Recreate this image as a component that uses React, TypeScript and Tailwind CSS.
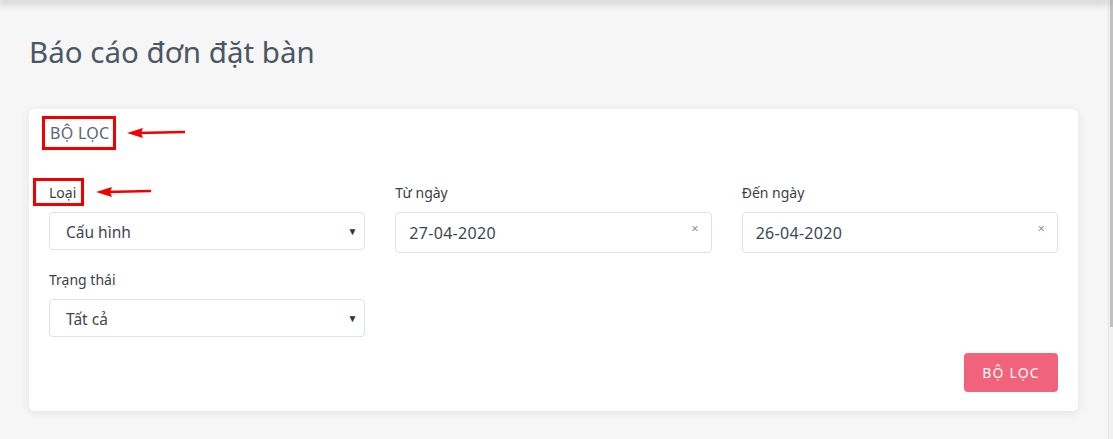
const font = { fontFamily: "'Noto Sans', 'Open Sans', sans-serif" };

const Arrow = ({ width }: { width: number }) => (
  <svg width={width} height="12" viewBox={`0 0 ${width} 12`} className="block">
    <line x1="10" y1="6" x2={width} y2="5" stroke="#f20000" strokeWidth="2.5" />
    <polygon points="0,6 16,1 14,6 16,11" fill="#f20000" />
  </svg>
);

const SelectBox = ({ value }: { value: string }) => (
  <div className="h-[38px] flex items-center justify-between bg-white border border-[#dde2ee] rounded-[4px] pl-4 pr-[7px]">
    <span className="pt-[3px] text-[15.5px] text-[#3b4754]">{value}</span>
    <span className="text-[10px] text-[#2c3440] leading-none">▼</span>
  </div>
);

const DateBox = ({ value }: { value: string }) => (
  <div className="h-[41px] flex items-center justify-between bg-white border border-[#dde2ee] rounded-[4px] pl-[13px] pr-[12px]">
    <span className="text-[16px] tracking-[0.3px] text-[#3b4754]">{value}</span>
    <span className="text-[13px] text-[#8a94a3] leading-none -mt-2">×</span>
  </div>
);

const Label = ({ children }: { children: React.ReactNode }) => (
  <div className="h-5 leading-5 text-[14px] text-[#3a3f46] mb-[9px]">{children}</div>
);

export default function App() {
  return (
    <div className="flex w-[1113px] h-[439px] bg-[#f6f6f6] overflow-hidden" style={font}>
      <div className="flex-1 relative">
        <div className="h-0 shadow-[0_0_10px_3px_rgba(0,0,0,0.22)]" />
        <div className="pl-[29px] pr-[30px]">
          <h1 className="pt-[32px] h-[109px] text-[29.5px] leading-[40px] text-[#4a5765]">
            Báo cáo đơn đặt bàn
          </h1>
          <div className="bg-white rounded-[6px] shadow-[0_2px_10px_rgba(0,0,0,0.08)] px-5 pt-2 pb-[19px]">
            <div className="h-8 mb-[34px] flex items-center">
              <span className="relative pl-[1px] text-[16px] tracking-[0.3px] text-[#5d6671]">
                BỘ LỌC
                <span className="absolute -left-[7px] -right-[6px] -top-[5px] -bottom-[5px] border-[3px] border-[#f20000]" />
                <span className="absolute left-[78px] top-[6px]">
                  <Arrow width={58} />
                </span>
              </span>
            </div>
            <div className="grid grid-cols-3 gap-x-[30px] gap-y-[17px]">
              <div>
                <Label>
                  <span className="relative">
                    Loại
                    <span className="absolute -left-4 -right-[8px] -top-[5px] -bottom-[4px] border-[3px] border-[#f20000]" />
                    <span className="absolute left-[47px] top-[3px]">
                      <Arrow width={55} />
                    </span>
                  </span>
                </Label>
                <SelectBox value="Cấu hình" />
              </div>
              <div>
                <Label>Từ ngày</Label>
                <DateBox value="27-04-2020" />
              </div>
              <div>
                <Label>Đến ngày</Label>
                <DateBox value="26-04-2020" />
              </div>
              <div>
                <Label>Trạng thái</Label>
                <SelectBox value="Tất cả" />
              </div>
            </div>
            <div className="flex justify-end mt-4">
              <button className="w-[94px] h-[39px] rounded-[4px] bg-[#f0637a] text-white text-[14px] tracking-[1.2px]">
                BỘ LỌC
              </button>
            </div>
          </div>
        </div>
      </div>
      <div className="w-[5px] bg-[#f1f1f1] border-l border-[#e6e6e6] flex justify-end">
        <div className="w-[3px] h-[327px] bg-[#c1c1c1]" />
      </div>
    </div>
  );
}
